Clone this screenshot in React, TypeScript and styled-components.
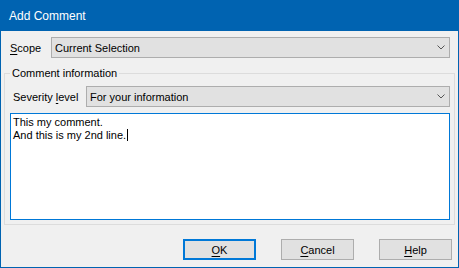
import React from 'react'
import styled, { createGlobalStyle } from 'styled-components'

const GlobalStyle = createGlobalStyle`
  html, body {
    margin: 0;
    padding: 0;
    background: #f0f0f0;
  }
  body {
    font-family: "Liberation Sans", Arial, sans-serif;
    font-size: 11px;
    color: #000;
  }
`

const Window = styled.div`
  width: 459px;
  height: 268px;
  box-sizing: border-box;
  display: flex;
  flex-direction: column;
  background: #f0f0f0;
  border: 1px solid #0063b1;
  border-top: none;
`
const TitleBar = styled.div`
  height: 31px;
  flex: none;
  display: flex;
  align-items: center;
  padding-left: 9px;
  background: #0063b1;
  color: #fff;
  font-size: 12px;
  margin: 0 -1px;
`
const Body = styled.div`
  flex: 1;
  display: flex;
  flex-direction: column;
  padding: 6px 3px 0 3px;
`
const FieldRow = styled.div<{ $labelWidth: number }>`
  display: grid;
  grid-template-columns: ${p => p.$labelWidth}px 1fr;
  align-items: center;
`
const ScopeRow = styled(FieldRow)`
  padding: 0 5px 0 6px;
`
const Label = styled.span`
  white-space: nowrap;
`
const Key = styled.span`
  text-decoration: underline;
  text-underline-offset: 2px;
`
const Combo = styled.div`
  height: 21px;
  box-sizing: border-box;
  display: flex;
  align-items: center;
  justify-content: space-between;
  padding: 0 4px 0 3px;
  background: #e1e1e1;
  border: 1px solid #adadad;
`
const Chevron = styled.svg`
  width: 8px;
  height: 5px;
  display: block;
`
const GroupBox = styled.fieldset`
  margin: 8px 0 0 0;
  padding: 6px 4px 4px 5px;
  border: 1px solid #dcdcdc;
  display: flex;
  flex-direction: column;
  gap: 6px;
  min-width: 0;
`
const Legend = styled.legend`
  padding: 0 2px;
  margin-left: 0;
  line-height: 14px;
`
const SeverityRow = styled(FieldRow)`
  padding-left: 3px;
`
const TextArea = styled.div`
  height: 107px;
  box-sizing: border-box;
  padding: 2px 2px;
  background: #fff;
  border: 1px solid #0078d7;
  line-height: 13px;
`
const Caret = styled.span`
  display: inline-block;
  width: 1px;
  height: 12px;
  margin-left: 1px;
  background: #000;
  vertical-align: -2px;
`
const ButtonBar = styled.div`
  display: flex;
  justify-content: flex-end;
  gap: 25px;
  padding: 14px 3px 0 0;
`
const Button = styled.div<{ $default?: boolean }>`
  width: 73px;
  height: 21px;
  box-sizing: border-box;
  display: flex;
  align-items: center;
  justify-content: center;
  background: #e1e1e1;
  border: ${p => (p.$default ? '2px solid #0078d7' : '1px solid #adadad')};
`

const ChevronIcon = () => (
  <Chevron viewBox="0 0 8 5">
    <path d="M0.5 0.5 L4 4 L7.5 0.5" fill="none" stroke="#555" strokeWidth="1" />
  </Chevron>
)

const App = () => {
  return (
    <>
      <GlobalStyle />
      <Window>
        <TitleBar>Add Comment</TitleBar>
        <Body>
          <ScopeRow $labelWidth={41}>
            <Label><Key>S</Key>cope</Label>
            <Combo>
              <span>Current Selection</span>
              <ChevronIcon />
            </Combo>
          </ScopeRow>
          <GroupBox>
            <Legend>Comment information</Legend>
            <SeverityRow $labelWidth={73}>
              <Label>Severity <Key>l</Key>evel</Label>
              <Combo>
                <span>For your information</span>
                <ChevronIcon />
              </Combo>
            </SeverityRow>
            <TextArea>
              This my comment.
              <br />
              And this is my 2nd line.<Caret />
            </TextArea>
          </GroupBox>
          <ButtonBar>
            <Button $default><span><Key>O</Key>K</span></Button>
            <Button><span><Key>C</Key>ancel</span></Button>
            <Button><span><Key>H</Key>elp</span></Button>
          </ButtonBar>
        </Body>
      </Window>
    </>
  )
}

export default App
